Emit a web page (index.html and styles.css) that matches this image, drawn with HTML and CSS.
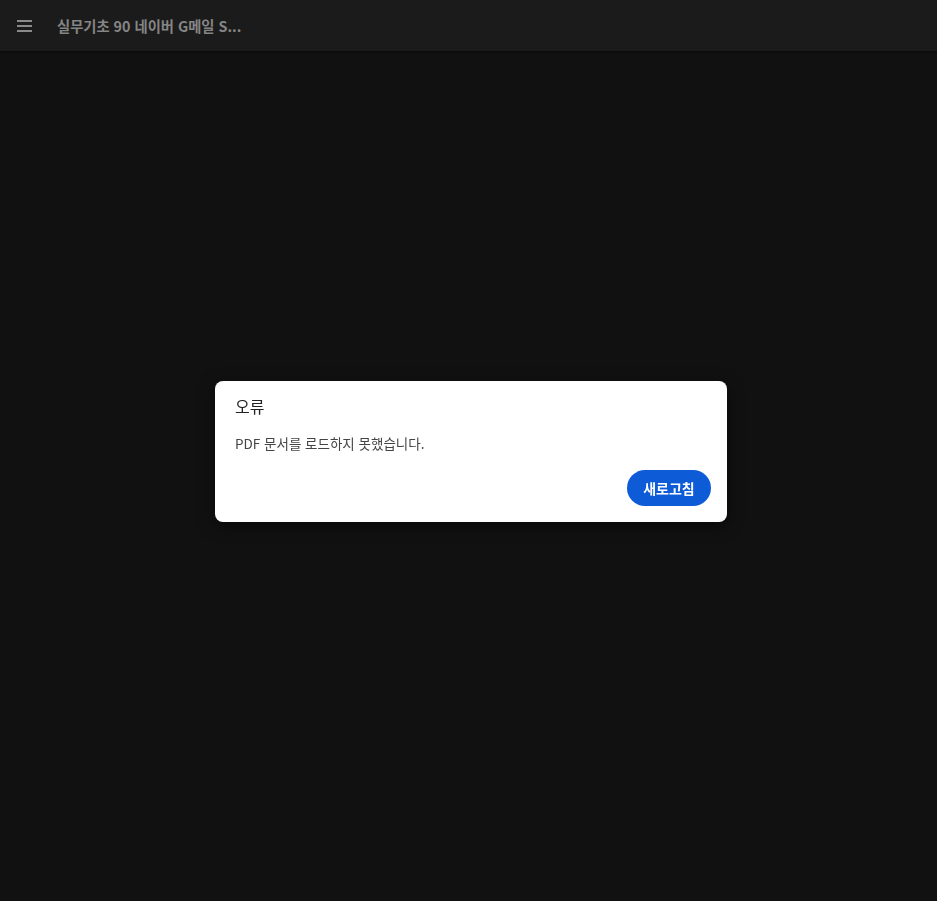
FILE: index.html
```html
<!DOCTYPE html>
<html lang="ko">
<head>
<meta charset="utf-8">
<link rel="stylesheet" href="styles.css">
</head>
<body>
<header class="topbar">
  <button class="menu" aria-label="menu">
    <svg width="16" height="12" viewBox="0 0 16 12"><rect x="0" y="0" width="15" height="2" fill="#8a8a8a"/><rect x="0" y="5" width="15" height="2" fill="#8a8a8a"/><rect x="0" y="10" width="15" height="2" fill="#8a8a8a"/></svg>
  </button>
  <span class="title">실무기초 90 네이버 G메일 S...</span>
</header>
<main class="stage"></main>
<div class="overlay">
  <div class="dialog">
    <div class="dlg-title">오류</div>
    <div class="dlg-body">PDF 문서를 로드하지 못했습니다.</div>
    <div class="dlg-actions"><button class="btn">새로고침</button></div>
  </div>
</div>
</body>
</html>
```
FILE: styles.css
```css
html, body { margin: 0; padding: 0; height: 100%; }
body {
  background: #111111;
  font-family: "Noto Sans CJK KR", "Noto Sans", sans-serif;
  display: flex;
  flex-direction: column;
}
.topbar {
  height: 51px;
  background: #1b1b1b;
  display: flex;
  align-items: center;
  flex-shrink: 0;
  box-shadow: 0 1px 2px rgba(0,0,0,0.4);
}
.menu {
  background: none;
  border: 0;
  padding: 0;
  margin-left: 17px;
  width: 16px;
  height: 12px;
  display: flex;
}
.title {
  margin-left: 24px;
  color: #858585;
  font-size: 14.3px;
  font-weight: 700;
}
.stage { flex: 1; }
.overlay {
  position: fixed;
  inset: 0;
  display: flex;
  align-items: center;
  justify-content: center;
  padding: 2px 0 0 5px;
}
.dialog {
  width: 512px;
  box-sizing: border-box;
  background: #ffffff;
  border-radius: 8px;
  padding: 14px 16px 16px 20px;
  box-shadow: 0 4px 16px rgba(0,0,0,0.5);
}
.dlg-title {
  font-size: 16px;
  color: #222;
  line-height: 22px;
}
.dlg-body {
  margin-top: 16px;
  font-size: 13.5px;
  color: #444;
  line-height: 20px;
}
.dlg-actions {
  display: flex;
  justify-content: flex-end;
  margin-top: 17px;
}
.btn {
  height: 36px;
  width: 84px;
  border: 0;
  border-radius: 18px;
  background: #0d5bd6;
  color: #fff;
  font-family: "Noto Sans CJK KR", sans-serif;
  font-size: 14px;
  font-weight: 700;
  padding: 0;
}
```
